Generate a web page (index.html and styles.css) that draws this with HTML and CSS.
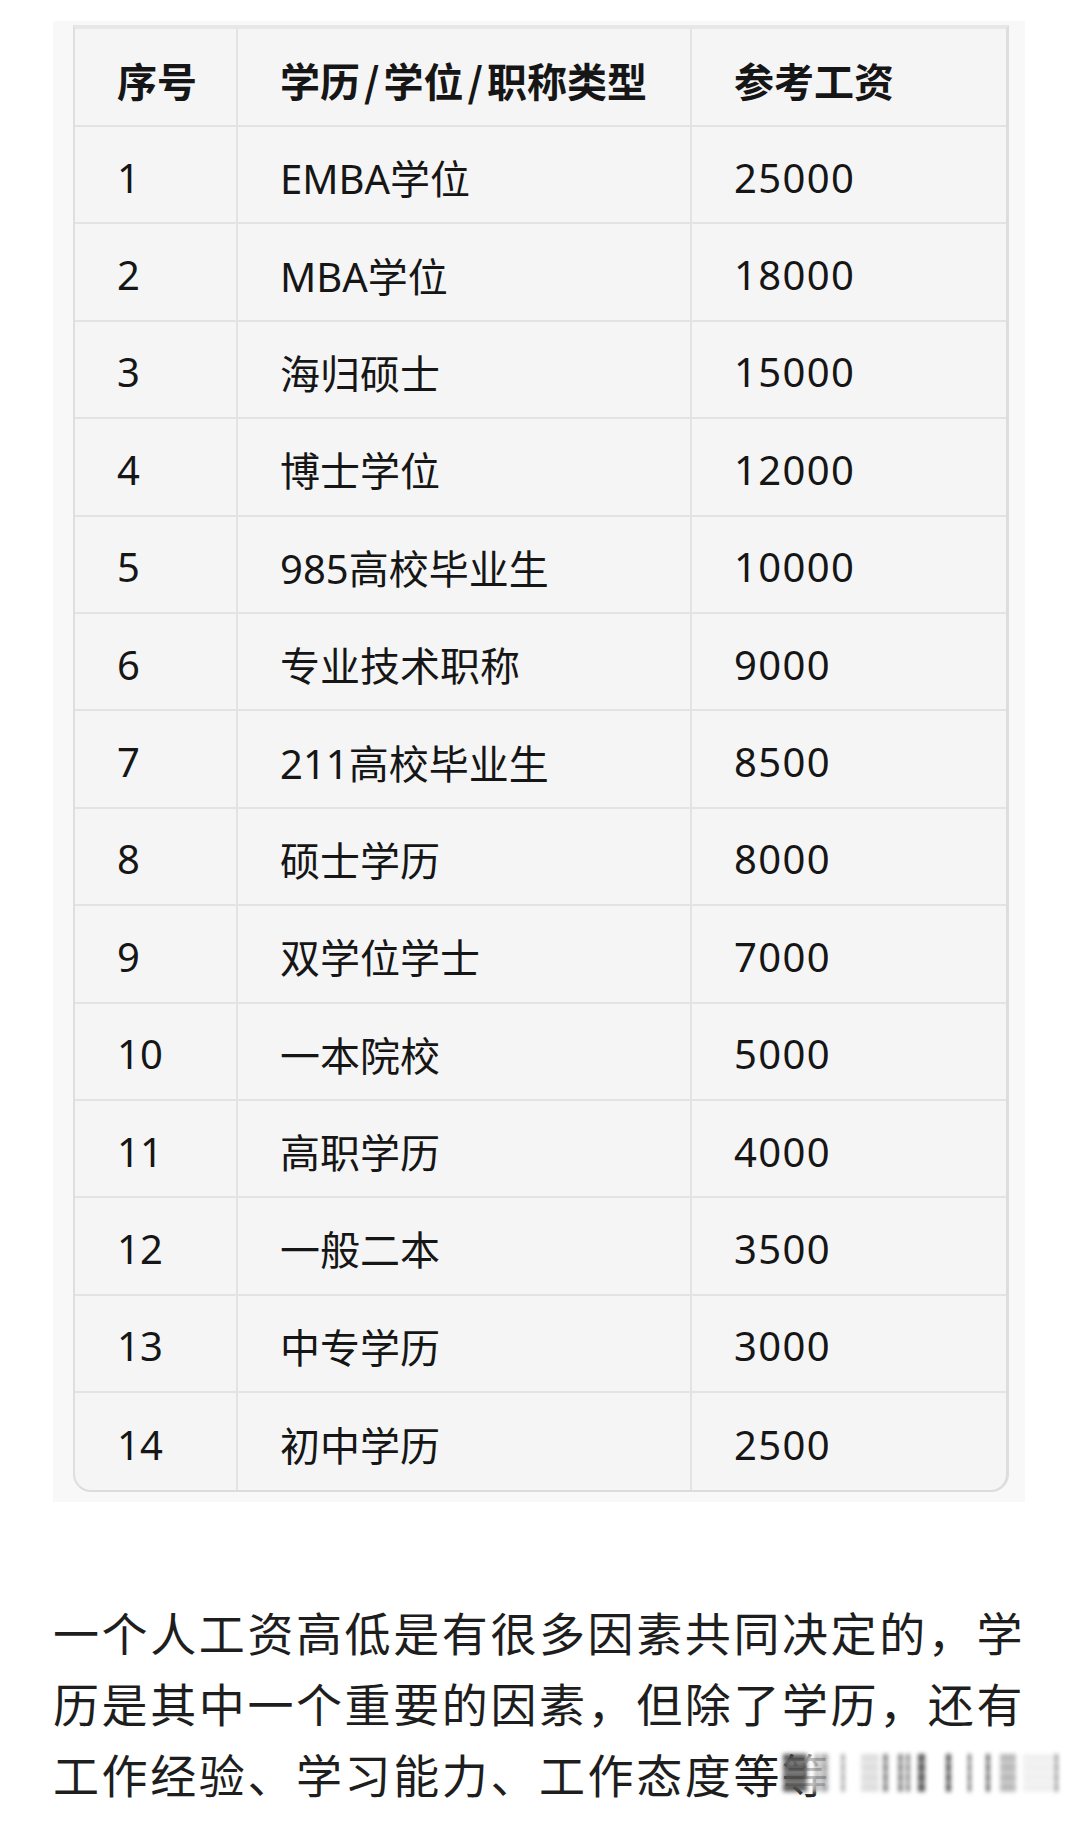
FILE: index.html
```html
<!DOCTYPE html>
<html lang="zh-CN">
<head>
<meta charset="utf-8">
<title>学历参考工资</title>
<link rel="stylesheet" href="styles.css">
</head>
<body>
<div class="page">
  <div class="card">
    <div class="table">
      <div class="cell head">序号</div><div class="cell head">学历<span class="slash">/</span>学位<span class="slash">/</span>职称类型</div><div class="cell head last">参考工资</div>
      <div class="cell">1</div><div class="cell">EMBA学位</div><div class="cell last">25000</div>
      <div class="cell">2</div><div class="cell">MBA学位</div><div class="cell last">18000</div>
      <div class="cell">3</div><div class="cell">海归硕士</div><div class="cell last">15000</div>
      <div class="cell">4</div><div class="cell">博士学位</div><div class="cell last">12000</div>
      <div class="cell">5</div><div class="cell">985高校毕业生</div><div class="cell last">10000</div>
      <div class="cell">6</div><div class="cell">专业技术职称</div><div class="cell last">9000</div>
      <div class="cell">7</div><div class="cell">211高校毕业生</div><div class="cell last">8500</div>
      <div class="cell">8</div><div class="cell">硕士学历</div><div class="cell last">8000</div>
      <div class="cell">9</div><div class="cell">双学位学士</div><div class="cell last">7000</div>
      <div class="cell">10</div><div class="cell">一本院校</div><div class="cell last">5000</div>
      <div class="cell">11</div><div class="cell">高职学历</div><div class="cell last">4000</div>
      <div class="cell">12</div><div class="cell">一般二本</div><div class="cell last">3500</div>
      <div class="cell">13</div><div class="cell">中专学历</div><div class="cell last">3000</div>
      <div class="cell bottom">14</div><div class="cell bottom">初中学历</div><div class="cell bottom last">2500</div>
    </div>
  </div>
  <div class="para">
    <p class="text">一个人工资高低是有很多因素共同决定的，学历是其中一个重要的因素，但除了学历，还有工作经验、学习能力、工作态度等等</p>
    <div class="smear" aria-hidden="true"></div>
  </div>
</div>
</body>
</html>
```
FILE: styles.css
```css
html, body {
  margin: 0;
  padding: 0;
  background: #ffffff;
}
body {
  width: 1079px;
  height: 1822px;
  overflow: hidden;
  font-family: "Noto Sans", "Noto Sans CJK SC", sans-serif;
  color: #161616;
}
.page {
  padding-top: 21px;
  padding-left: 53px;
}
.card {
  width: 972px;
  box-sizing: border-box;
  background: #f8f8f8;
  padding: 4px 16px 10px 20px;
}
.table {
  display: grid;
  grid-template-columns: 163px 454px 316px;
  grid-template-rows: 98px;
  grid-auto-rows: 97.4px;
  background: #f5f5f5;
  border-top: 4px solid #e7e7e7;
  border-left: 2px solid #dedede;
  border-right: 3px solid #dddddd;
  border-bottom: 2px solid #dcdcdc;
  border-radius: 0 0 18px 18px;
  overflow: hidden;
}
.cell {
  box-sizing: border-box;
  display: flex;
  align-items: center;
  padding: 5px 0 0 42px;
  font-size: 40px;
  white-space: nowrap;
  border-right: 2px solid #e3e3e3;
  border-bottom: 2px solid #e3e3e3;
}
.cell.last {
  border-right: none;
  letter-spacing: 1.4px;
}
.cell.bottom {
  border-bottom: none;
}
.cell.head {
  font-weight: 600;
  letter-spacing: 0;
  font-family: "Noto Sans CJK SC", sans-serif;
}
.slash {
  margin: 0 4px;
}
.para {
  position: relative;
  margin-top: 94px;
}
.text {
  margin: 0;
  width: 975px;
  font-family: "Noto Sans CJK SC", sans-serif;
  font-size: 46px;
  letter-spacing: 2.6px;
  line-height: 71px;
  color: #1e1e1e;
}
.smear {
  position: absolute;
  left: 730px;
  top: 158px;
  width: 276px;
  height: 38px;
  background-color: rgba(255, 255, 255, 0.7);
  background-image:
    repeating-linear-gradient(to bottom, rgba(255,255,255,0) 0 7px, rgba(255,255,255,0.35) 7px 10px),
    linear-gradient(to right,
      rgba(20,20,20,0.7) 0 24px,
      transparent 24px 32px,
      rgba(60,60,60,0.45) 32px 36px,
      transparent 36px 38px,
      rgba(60,60,60,0.45) 38px 45px,
      transparent 45px 58px,
      rgba(60,60,60,0.4) 58px 62px,
      transparent 62px 78px,
      rgba(90,90,90,0.2) 78px 96px,
      transparent 96px 100px,
      rgba(40,40,40,0.55) 100px 105px,
      transparent 105px 115px,
      rgba(40,40,40,0.55) 115px 120px,
      transparent 120px 123px,
      rgba(40,40,40,0.55) 123px 127px,
      transparent 127px 135px,
      rgba(20,20,20,0.7) 135px 142px,
      transparent 142px 163px,
      rgba(20,20,20,0.7) 163px 168px,
      transparent 168px 185px,
      rgba(30,30,30,0.65) 185px 188px,
      transparent 188px 203px,
      rgba(30,30,30,0.65) 203px 207px,
      transparent 207px 217px,
      rgba(80,80,80,0.4) 217px 233px,
      transparent 233px 240px,
      rgba(150,150,150,0.15) 240px 272px,
      rgba(40,40,40,0.5) 272px 275px,
      transparent 275px);
  filter: blur(2px);
}
```
